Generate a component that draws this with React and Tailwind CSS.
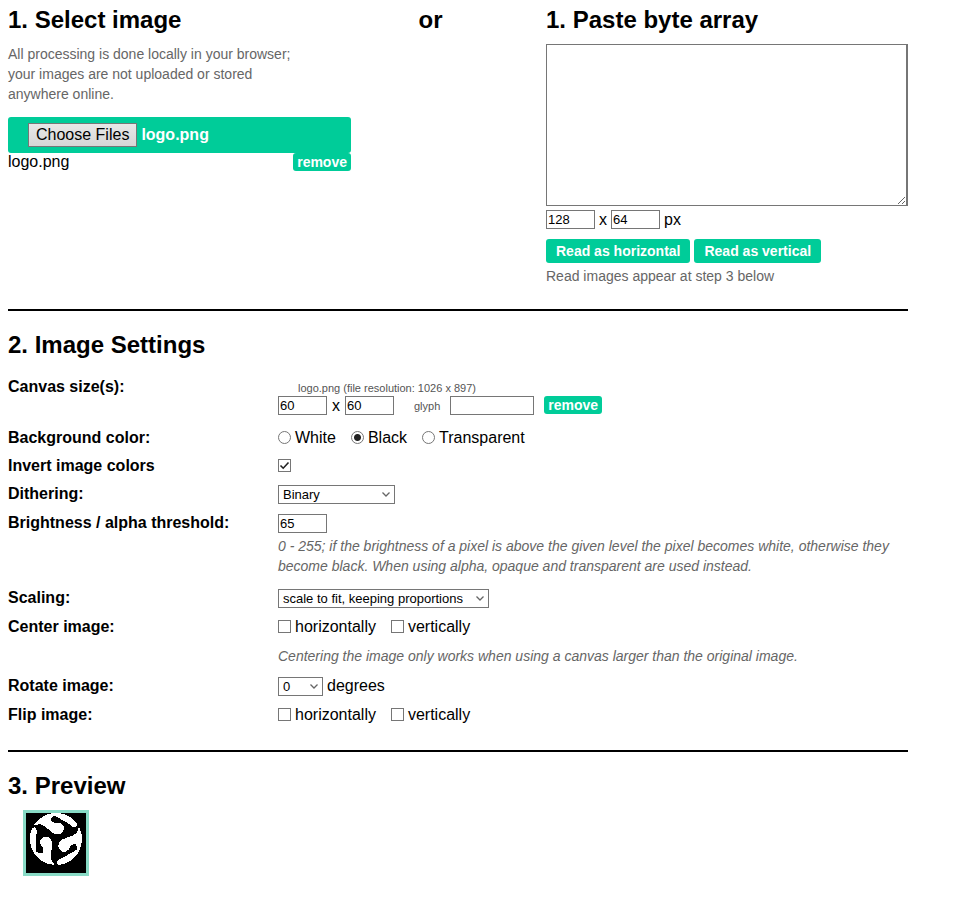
import { useState } from 'react';

const numberInput =
  'h-[19px] w-[49px] border border-[#767676] bg-white px-px text-[13px] leading-[15px] text-black';
const tickBox = 'size-[13px] shrink-0 appearance-none border border-[#767676] bg-white';
const readButton = 'h-6 rounded-[3px] bg-[#00cc99] px-[10px] text-[14px] font-bold text-white';

const LOGO_ARM =
  'M5.8 16 A26 26 0 0 0 28.2 51.9 L28.2 50.5 Q25 48.5 24.6 44 Q24.6 40 25.8 36 Q27 31.5 25.8 28 Q24 23.8 19.8 23.8 Q15 24 14 28.5 Q13.8 32 16.6 34.5 Q17.4 37 16.4 40.5 Q13 40.6 10.4 38.8 L10.4 26 Q10.2 20 11 18 Q9.5 15 8.3 14 Z';

// One arm, turned three times round the centre
function LogoPreview() {
  return (
    <svg viewBox="0 0 60 60" className="block size-[60px] bg-black" role="img" aria-label="logo.png preview" shapeRendering="crispEdges">
      {[0, 120, 240].map((angle) => (
        <path key={angle} d={LOGO_ARM} fill="#fff" transform={`rotate(${angle} 30 26)`} />
      ))}
    </svg>
  );
}

function RemoveButton({ onClick }) {
  return (
    <button type="button" onClick={onClick} className="h-[18px] rounded-[3px] bg-[#00cc99] px-1 text-[14px] leading-[18px] font-bold text-white">
      remove
    </button>
  );
}

function Select({ id, width, value, onChange, options }) {
  return (
    <span className={`relative inline-block ${width}`}>
      <select id={id} value={value} onChange={(e) => onChange(e.target.value)} className="block h-[19px] w-full appearance-none border border-[#767676] bg-white pr-4 pl-1 text-[13px] leading-[17px]">
        {options.map((option) => (
          <option key={option}>{option}</option>
        ))}
      </select>
      <svg viewBox="0 0 8 5" className="pointer-events-none absolute top-[7px] right-[5px] h-[5px] w-2" fill="none" stroke="#666" strokeWidth="1.3">
        <path d="M0.5 0.5 L4 4 L7.5 0.5" />
      </svg>
    </span>
  );
}

function Check({ label, checked, onChange }) {
  return (
    <label className="flex items-center gap-1">
      <input type="checkbox" checked={checked} onChange={onChange} className={`mb-[2px] ${tickBox}`} />
      {label}
    </label>
  );
}

function Row({ label, htmlFor, children }) {
  return (
    <div className="flex">
      <label htmlFor={htmlFor} className="w-[270px] shrink-0 font-bold">
        {label}
      </label>
      <div className="min-w-0 flex-1">{children}</div>
    </div>
  );
}

export default function App() {
  const [background, setBackground] = useState('Black');
  const [invert, setInvert] = useState(true);
  const [dithering, setDithering] = useState('Binary');
  const [scaling, setScaling] = useState('scale to fit, keeping proportions');
  const [rotation, setRotation] = useState('0');
  const [flags, setFlags] = useState({ centerH: false, centerV: false, flipH: false, flipV: false });

  const toggle = (key) => () => setFlags({ ...flags, [key]: !flags[key] });

  return (
    <div className="mx-2 mt-[6px] mb-2 max-w-[900px] bg-white font-['Liberation_Sans',Arial,sans-serif] text-[16px] leading-[18px] text-black">
      {/* Step 1 */}
      <div className="flex border-b-2 border-black pb-[23px]">
        <section className="w-[343px]">
          <h2 className="text-2xl leading-7 font-bold">1. Select image</h2>
          <p className="mt-[10px] w-[300px] text-[14px] leading-5 text-[#666]">
            All processing is done locally in your browser; your images are not uploaded or stored anywhere online.
          </p>
          <label className="mt-[13px] flex h-9 items-center gap-1 rounded-[3px] bg-[#00cc99] px-5 font-bold text-white">
            <input type="file" multiple className="sr-only" />
            <span className="flex h-6 items-center border border-[#767676] bg-linear-to-b from-[#e8e8e8] to-[#d6d6d6] px-[7px] font-normal text-black">
              Choose Files
            </span>
            logo.png
          </label>
          <div className="flex justify-between">
            <span>logo.png</span>
            <RemoveButton />
          </div>
        </section>

        <h2 className="flex-1 pr-9 text-center text-2xl leading-7 font-bold">or</h2>

        <section className="w-[362px]">
          <h2 className="text-2xl leading-7 font-bold">1. Paste byte array</h2>
          <textarea aria-label="Byte array" className="mt-[10px] block h-[162px] w-full border border-r-2 border-[#767676] bg-white" />
          <div className="mt-1 flex items-center gap-1 leading-[19px]">
            <input aria-label="Width" defaultValue="128" className={numberInput} />
            x
            <input aria-label="Height" defaultValue="64" className={numberInput} />
            px
          </div>
          <div className="mt-[10px] flex gap-1">
            <button type="button" className={readButton}>
              Read as horizontal
            </button>
            <button type="button" className={readButton}>
              Read as vertical
            </button>
          </div>
          <p className="mt-[3px] text-[14px] leading-5 text-[#666]">Read images appear at step 3 below</p>
        </section>
      </div>

      {/* Step 2 */}
      <section className="border-b-2 border-black pt-5 pb-[26px]">
        <h2 className="text-2xl leading-7 font-bold">2. Image Settings</h2>
        <div className="mt-[19px] flex flex-col gap-[10px]">
          <Row label="Canvas size(s):" htmlFor="canvas-width">
            <div className="pt-[3px] pb-1">
              <p className="pl-5 text-[11px] leading-[15px] text-[#555]">logo.png (file resolution: 1026 x 897)</p>
              <div className="flex items-start">
                <div className="flex items-center gap-[5px]">
                  <input id="canvas-width" defaultValue="60" className={numberInput} />
                  x
                  <input aria-label="Canvas height" defaultValue="60" className={numberInput} />
                </div>
                <label className="ml-5 flex items-center gap-[10px] text-[11px] text-[#555]">
                  glyph
                  <input className="h-[19px] w-[84px] border border-[#767676] bg-white px-px text-[13px] text-black" />
                </label>
                <span className="ml-[10px] flex">
                  <RemoveButton />
                </span>
              </div>
            </div>
          </Row>
          <Row label="Background color:">
            <div className="flex gap-[15px]">
              {['White', 'Black', 'Transparent'].map((color) => (
                <label key={color} className="flex items-center gap-1">
                  <input
                    type="radio"
                    name="background"
                    checked={background === color}
                    onChange={() => setBackground(color)}
                    className="mb-[2px] size-[13px] appearance-none rounded-full border border-[#767676] bg-white checked:bg-[radial-gradient(circle,#222_3px,#fff_4px)]"
                  />
                  {color}
                </label>
              ))}
            </div>
          </Row>
          <Row label="Invert image colors" htmlFor="invert">
            <div className="flex h-[18px] items-center">
              <span className="relative mb-[2px] flex">
                <input id="invert" type="checkbox" checked={invert} onChange={() => setInvert(!invert)} className={tickBox} />
                {invert && (
                  <svg viewBox="0 0 13 13" className="pointer-events-none absolute inset-0" fill="none" stroke="#222" strokeWidth="1.6">
                    <path d="M2.5 6.5 L5.2 9.2 L10.5 3.5" />
                  </svg>
                )}
              </span>
            </div>
          </Row>
          <Row label="Dithering:" htmlFor="dithering">
            <div className="flex">
              <Select id="dithering" width="w-[117px]" value={dithering} onChange={setDithering} options={['Binary', 'Bayer', 'Floyd-Steinberg', 'Atkinson']} />
            </div>
          </Row>
          <Row label="Brightness / alpha threshold:" htmlFor="threshold">
            <input id="threshold" defaultValue="65" className={`block ${numberInput}`} />
            <p className="mt-[3px] mb-[3px] text-[14px] leading-5 text-[#666] italic">
              0 - 255; if the brightness of a pixel is above the given level the pixel becomes white, otherwise they become black. When using alpha, opaque and transparent are used instead.
            </p>
          </Row>
          <Row label="Scaling:" htmlFor="scaling">
            <div className="flex">
              <Select
                id="scaling"
                width="w-[211px]"
                value={scaling}
                onChange={setScaling}
                options={['original size', 'scale to fit, keeping proportions', 'stretch to fill canvas']}
              />
            </div>
          </Row>
          <Row label="Center image:">
            <div className="flex gap-[15px]">
              <Check label="horizontally" checked={flags.centerH} onChange={toggle('centerH')} />
              <Check label="vertically" checked={flags.centerV} onChange={toggle('centerV')} />
            </div>
            <p className="mt-[10px] mb-px text-[14px] leading-5 text-[#666] italic">
              Centering the image only works when using a canvas larger than the original image.
            </p>
          </Row>
          <Row label="Rotate image:" htmlFor="rotate">
            <div className="flex gap-1">
              <Select id="rotate" width="w-[45px]" value={rotation} onChange={setRotation} options={['0', '90', '180', '270']} />
              <span>degrees</span>
            </div>
          </Row>
          <Row label="Flip image:">
            <div className="flex gap-[15px]">
              <Check label="horizontally" checked={flags.flipH} onChange={toggle('flipH')} />
              <Check label="vertically" checked={flags.flipV} onChange={toggle('flipV')} />
            </div>
          </Row>
        </div>
      </section>

      {/* Step 3 */}
      <section className="pt-5">
        <h2 className="text-2xl leading-7 font-bold">3. Preview</h2>
        <div className="mt-[10px] ml-[15px] w-fit border-[3px] border-[#88dac5]">
          <LogoPreview />
        </div>
      </section>
    </div>
  );
}
